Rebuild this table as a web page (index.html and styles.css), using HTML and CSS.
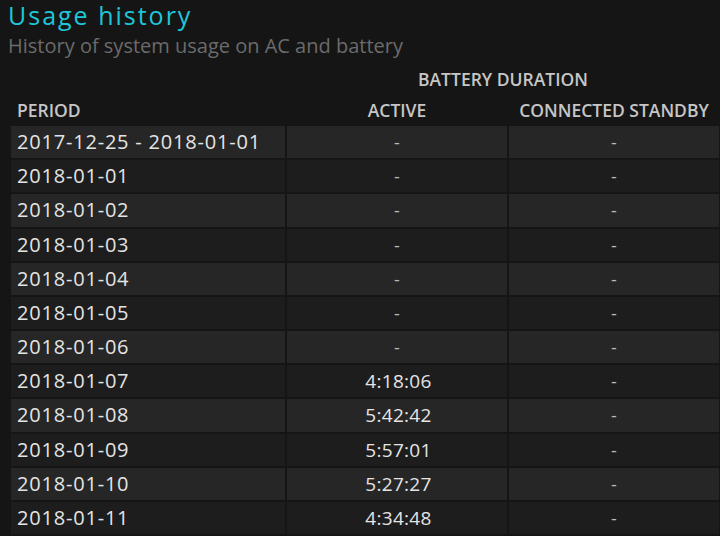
FILE: index.html
```html
<!DOCTYPE html>
<html>
<head>
<meta charset="utf-8">
<link rel="stylesheet" href="styles.css">
</head>
<body>
<h1 class="title">Usage history</h1>
<p class="subtitle">History of system usage on AC and battery</p>
<table class="usage">
  <colgroup>
    <col class="c-period">
    <col class="c-active">
    <col class="c-standby">
  </colgroup>
  <thead>
    <tr class="group-row">
      <th></th>
      <th colspan="2" class="group">BATTERY DURATION</th>
    </tr>
    <tr class="col-row">
      <th class="period-h">PERIOD</th>
      <th class="center">ACTIVE</th>
      <th class="center">CONNECTED STANDBY</th>
    </tr>
  </thead>
  <tbody>
    <tr><td class="period">2017-12-25 - 2018-01-01</td><td class="val dash">-</td><td class="val dash">-</td></tr>
    <tr><td class="period">2018-01-01</td><td class="val dash">-</td><td class="val dash">-</td></tr>
    <tr><td class="period">2018-01-02</td><td class="val dash">-</td><td class="val dash">-</td></tr>
    <tr><td class="period">2018-01-03</td><td class="val dash">-</td><td class="val dash">-</td></tr>
    <tr><td class="period">2018-01-04</td><td class="val dash">-</td><td class="val dash">-</td></tr>
    <tr><td class="period">2018-01-05</td><td class="val dash">-</td><td class="val dash">-</td></tr>
    <tr><td class="period">2018-01-06</td><td class="val dash">-</td><td class="val dash">-</td></tr>
    <tr><td class="period">2018-01-07</td><td class="val">4:18:06</td><td class="val dash">-</td></tr>
    <tr><td class="period">2018-01-08</td><td class="val">5:42:42</td><td class="val dash">-</td></tr>
    <tr><td class="period">2018-01-09</td><td class="val">5:57:01</td><td class="val dash">-</td></tr>
    <tr><td class="period">2018-01-10</td><td class="val">5:27:27</td><td class="val dash">-</td></tr>
    <tr><td class="period">2018-01-11</td><td class="val">4:34:48</td><td class="val dash">-</td></tr>
  </tbody>
</table>
</body>
</html>
```
FILE: styles.css
```css
html, body {
  background: #151515;
}
body {
  margin: 0;
  padding: 0 0 0 8px;
  font-family: "Open Sans", "Noto Sans", sans-serif;
  color: #e4e4e4;
  overflow: hidden;
}
.title {
  margin: 0;
  font-size: 25px;
  font-weight: 400;
  letter-spacing: 2px;
  line-height: 30px;
  color: #1ec6d9;
}
.subtitle {
  margin: 0;
  font-size: 20px;
  line-height: 32px;
  color: #6b6b6b;
}
.usage {
  border-spacing: 2px;
  border-collapse: separate;
  margin-left: 1px;
  margin-top: 0;
  table-layout: fixed;
  width: 712px;
}
.c-period { width: 274px; }
.c-active { width: 220px; }
.c-standby { width: 210px; }
.usage th {
  font-size: 17.5px;
  font-weight: 600;
  color: #c6c6c6;
  padding: 0;
  height: 29px;
  line-height: 20px;
  vertical-align: middle;
  white-space: nowrap;
}
.usage .period-h {
  text-align: left;
  padding-left: 6px;
}
.usage .center {
  text-align: center;
}
.usage td {
  height: 32.18px;
  padding: 0;
  font-size: 19px;
  letter-spacing: 0.3px;
  line-height: 24px;
  background: #1d1d1d;
  white-space: nowrap;
}
.usage tbody tr:nth-child(odd) td {
  background: #262626;
}
.usage .period {
  padding-left: 6px;
  font-size: 20px;
  letter-spacing: 0.8px;
}
.usage .val {
  text-align: center;
  padding-left: 3px;
}
.usage .dash {
  font-size: 18px;
  letter-spacing: 0;
  color: #b8b8b8;
  padding-left: 0;
}
```
